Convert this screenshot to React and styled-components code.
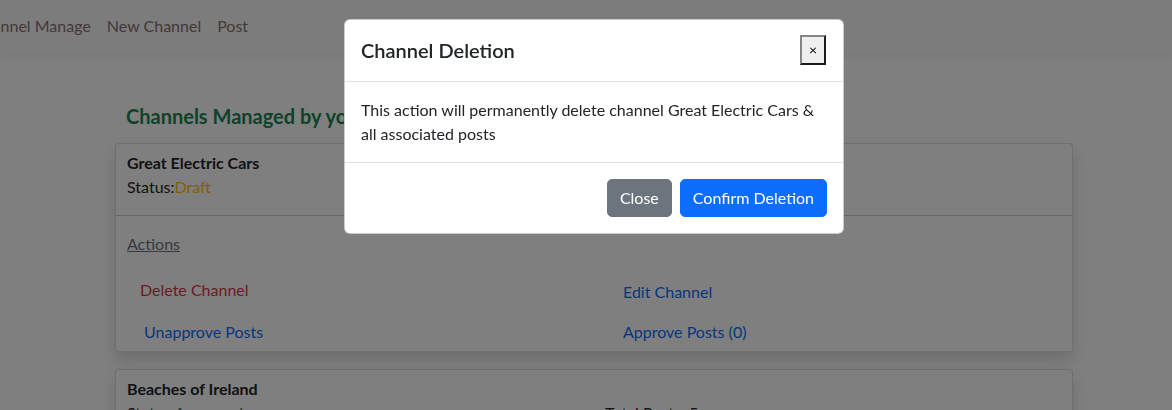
import React from 'react'
import styled, { createGlobalStyle } from 'styled-components'

const channels = [
  { name: 'Great Electric Cars', status: 'Draft', posts: 0, pending: 0 },
  { name: 'Beaches of Ireland', status: 'Approved', posts: 5, pending: 0 },
]

function ChannelCard({ channel, withActions }) {
  return (
    <Card>
      <CardTop>
        <div>
          <ChannelName>{channel.name}</ChannelName>
          <div>
            Status:<Status $status={channel.status}>{channel.status}</Status>
          </div>
        </div>
        <RightInfo>Total Posts: {channel.posts}</RightInfo>
      </CardTop>
      {withActions && (
        <ActionsArea>
          <ActionsLabel>Actions</ActionsLabel>
          <ActionsGrid>
            <ActionButton $color="#dc3545">Delete Channel</ActionButton>
            <ActionButton $color="#0d6efd" $drop>Edit Channel</ActionButton>
            <ActionButton $color="#0d6efd" $indent>Unapprove Posts</ActionButton>
            <ActionButton $color="#0d6efd">Approve Posts ({channel.pending})</ActionButton>
          </ActionsGrid>
        </ActionsArea>
      )}
    </Card>
  )
}

function App() {
  return (
    <>
      <GlobalStyle />
      <Page>
        <Navbar>
          <NavList>
            <NavLink href="#/">Channel Manage</NavLink>
            <NavLink href="#/">New Channel</NavLink>
            <NavLink href="#/">Post</NavLink>
          </NavList>
        </Navbar>
        <Main>
          <Heading>Channels Managed by you</Heading>
          {channels.map((c, i) => (
            <ChannelCard key={c.name} channel={c} withActions={i === 0} />
          ))}
        </Main>
      </Page>

      <Backdrop />
      <ModalWrap>
        <Dialog>
          <ModalHeader>
            <ModalTitle>Channel Deletion</ModalTitle>
            <CloseX type="button">×</CloseX>
          </ModalHeader>
          <ModalBody>
            This action will permanently delete channel Great Electric Cars &amp; all associated posts
          </ModalBody>
          <ModalFooter>
            <Btn $bg="#6c757d">Close</Btn>
            <Btn $bg="#0d6efd">Confirm Deletion</Btn>
          </ModalFooter>
        </Dialog>
      </ModalWrap>
    </>
  )
}

export default App

const GlobalStyle = createGlobalStyle`
  *, *::before, *::after { box-sizing: border-box; }
  html, body {
    margin: 0;
    padding: 0;
    overflow: hidden;
  }
  body {
    font-family: Lato, "Liberation Sans", sans-serif;
    font-size: 16px;
    line-height: 1.5;
    color: #212529;
    background: #fff;
  }
`

const Page = styled.div`
  height: 410px;
  overflow: hidden;
  padding-left: 16px;
`

const Navbar = styled.nav`
  height: 54px;
  margin-left: -16px;
  background: #f8f9fa;
  box-shadow: 0 2px 8px rgba(0,0,0,0.08);
  display: flex;
  align-items: center;
  padding-bottom: 2px;
`

const NavList = styled.div`
  display: flex;
  margin-left: -35px;
`

const NavLink = styled.a`
  padding: 8px;
  color: #8a7070;
  text-decoration: none;
`

const Main = styled.main`
  width: 958px;
  margin: 0 auto;
`

const Heading = styled.h4`
  margin: 0 0 12px;
  padding: 47px 11px 0;
  font-size: 20px;
  font-weight: 700;
  line-height: 1.5;
  color: #198754;
`

const Card = styled.section`
  background: #fff;
  border: 1px solid rgba(0,0,0,0.125);
  border-radius: 4px;
  box-shadow: 0 8px 16px rgba(0,0,0,0.15);
  & + & {
    margin-top: 17px;
  }
`

const CardTop = styled.div`
  display: grid;
  grid-template-columns: 478px 1fr;
  padding: 7px 11px 16px;
  border-bottom: 1px solid #cdcdcd;
`

const ChannelName = styled.div`
  font-weight: 700;
`

const Status = styled.span`
  color: ${p => (p.$status === 'Draft' ? '#ffc107' : '#198754')};
`

const RightInfo = styled.div`
  padding-top: 24px;
`

const ActionsArea = styled.div`
  padding: 16px 11px 0;
`

const ActionsLabel = styled.div`
  color: #6c757d;
  text-decoration: underline;
`

const ActionsGrid = styled.div`
  display: grid;
  grid-template-columns: 483px 1fr;
  row-gap: 4px;
  margin-top: 15px;
`

const ActionButton = styled.button`
  justify-self: start;
  border: 1px solid transparent;
  background: none;
  font: inherit;
  line-height: 24px;
  padding: ${p => (p.$drop ? '8px 12px 4px' : '6px 12px')};
  padding-left: ${p => (p.$indent ? '16px' : '12px')};
  color: ${p => p.$color};
  cursor: pointer;
`

const Backdrop = styled.div`
  position: fixed;
  inset: 0;
  background: rgba(0,0,0,0.5);
`

const ModalWrap = styled.div`
  position: fixed;
  inset: 0;
  display: flex;
  justify-content: center;
  align-items: flex-start;
  padding: 19px 0 0 16px;
`

const Dialog = styled.div`
  width: 500px;
  background: #fff;
  border: 1px solid rgba(0,0,0,0.2);
  border-radius: 6px;
`

const ModalHeader = styled.div`
  display: flex;
  align-items: center;
  justify-content: space-between;
  padding: 15px 16px 16px;
  border-bottom: 1px solid #dee2e6;
`

const ModalTitle = styled.h5`
  margin: 0;
  font-size: 20px;
  font-weight: 600;
  line-height: 1.5;
`

const CloseX = styled.button`
  font: inherit;
  font-size: 14px;
  line-height: 24px;
  padding: 1px 7px;
  margin-right: 1px;
  background: #efefef;
  color: #000;
  border: 2px solid;
  border-color: #858585 #1b1b1b #1b1b1b #858585;
  border-radius: 0;
`

const ModalBody = styled.div`
  padding: 16px;
  width: 100%;
`

const ModalFooter = styled.div`
  display: flex;
  justify-content: flex-end;
  align-items: center;
  gap: 8px;
  padding: 16px;
  border-top: 1px solid #dee2e6;
`

const Btn = styled.button`
  font: inherit;
  line-height: 24px;
  padding: 6px 12px;
  border: 1px solid ${p => p.$bg};
  border-radius: 5px;
  background: ${p => p.$bg};
  color: #fff;
  cursor: pointer;
`
